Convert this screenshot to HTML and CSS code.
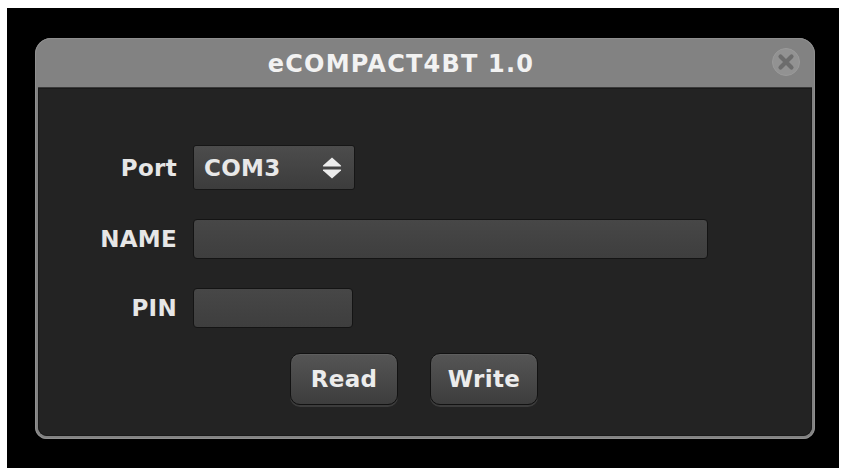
FILE: index.html
```html
<!DOCTYPE html>
<html>
<head>
<meta charset="utf-8">
<title>eCOMPACT4BT 1.0</title>
<link rel="stylesheet" href="styles.css">
</head>
<body>
<div class="stage">
  <div class="dialog">
    <div class="titlebar">
      <div class="title">eCOMPACT4BT 1.0</div>
      <div class="close">
        <svg width="28" height="28" viewBox="0 0 28 28">
          <circle cx="14" cy="14" r="13.5" fill="#929292" stroke="#9a9a9a" stroke-width="1"/>
          <path d="M8.5 8.5 L19.5 19.5 M19.5 8.5 L8.5 19.5" stroke="#6c6c6c" stroke-width="4.2" stroke-linecap="round"/>
        </svg>
      </div>
    </div>
    <div class="content">
      <div class="form">
        <div class="label">Port</div>
        <div class="select">
          <span class="select-text">COM3</span>
          <svg class="arrows" width="22" height="24" viewBox="0 0 22 24">
            <path d="M11 1.5 L20 9.5 Q20.5 10.5 19.5 10.5 L2.5 10.5 Q1.5 10.5 2 9.5 Z" fill="#ececec"/>
            <path d="M11 22.5 L20 14.5 Q20.5 13.5 19.5 13.5 L2.5 13.5 Q1.5 13.5 2 14.5 Z" fill="#ececec"/>
          </svg>
        </div>
        <div class="label">NAME</div>
        <div class="field field-name"></div>
        <div class="label">PIN</div>
        <div class="field field-pin"></div>
        <div class="buttons">
          <div class="btn">Read</div>
          <div class="btn">Write</div>
        </div>
      </div>
    </div>
  </div>
</div>
</body>
</html>
```

FILE: styles.css
```css
html, body {
  margin: 0;
  padding: 0;
  background: #ffffff;
}

body {
  font-family: "DejaVu Sans", "Liberation Sans", sans-serif;
  font-weight: bold;
}

.stage {
  margin: 8px 6px 0 7px;
  height: 460px;
  background: #000000;
  padding: 30px 0 0 28px;
  box-sizing: border-box;
  overflow: hidden;
}

.dialog {
  width: 780px;
  height: 401px;
  box-sizing: border-box;
  background: #828282;
  border-radius: 16px 16px 12px 12px;
  padding: 0 3px 3px;
  display: flex;
  flex-direction: column;
  box-shadow: inset 0 0 0 1px #8f8f8f;
}

.titlebar {
  height: 49px;
  flex: none;
  display: flex;
  align-items: center;
  padding-right: 12px;
}

.title {
  flex: 1;
  text-align: center;
  color: #f2f2f2;
  font-size: 24px;
  letter-spacing: 1.2px;
  padding-top: 2px;
}

.close {
  width: 28px;
  height: 28px;
  margin-left: 8px;
  margin-top: -2px;
}

.close svg {
  display: block;
}

.content {
  flex: 1;
  background: #232323;
  border-top: 1px solid #3a3a3a;
  border-radius: 0 0 9px 9px;
  box-shadow: inset 0 0 0 1px #1a1a1a;
  padding: 57px 0 0 42px;
}

.form {
  display: grid;
  grid-template-columns: 97px max-content;
  column-gap: 16px;
  row-gap: 29px;
  align-items: center;
}

.label {
  justify-self: end;
  color: #e6e6e6;
  font-size: 23px;
  letter-spacing: 0.3px;
}

.select {
  width: 162px;
  height: 45px;
  box-sizing: border-box;
  border: 1px solid #161616;
  border-radius: 3px;
  background: linear-gradient(#4c4c4c, #3c3c3c);
  display: flex;
  align-items: center;
  justify-content: space-between;
  padding: 0 11px 0 10px;
}

.select-text {
  color: #e8e8e8;
  font-size: 23px;
  letter-spacing: 0.3px;
}

.arrows {
  display: block;
}

.field {
  height: 40px;
  box-sizing: border-box;
  border: 1px solid #141414;
  border-radius: 4px;
  background: linear-gradient(#474747, #3e3e3e);
}

.field-name {
  width: 515px;
}

.field-pin {
  width: 160px;
}

.buttons {
  grid-column: 2;
  display: flex;
  gap: 32px;
  padding-left: 97px;
  margin-top: -4px;
}

.btn {
  width: 108px;
  height: 52px;
  box-sizing: border-box;
  border: 1px solid #121212;
  border-radius: 10px;
  background: linear-gradient(#555555, #3d3d3d);
  box-shadow: 0 2px 0 #3c3c3c, inset 0 1px 0 #5e5e5e;
  color: #ececec;
  font-size: 23px;
  letter-spacing: 0.3px;
  display: flex;
  align-items: center;
  justify-content: center;
}
```
